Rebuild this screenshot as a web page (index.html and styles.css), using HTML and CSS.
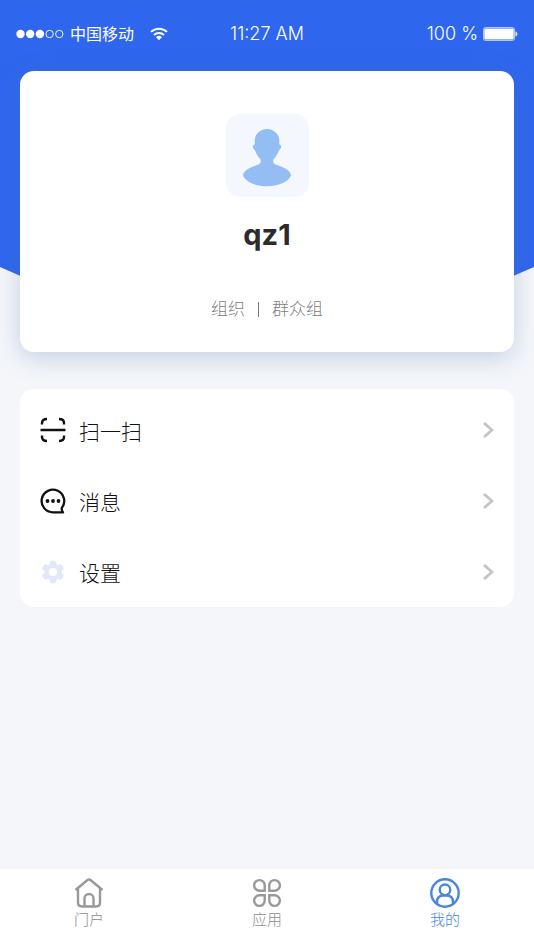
FILE: index.html
```html
<!DOCTYPE html>
<html lang="zh-CN">
<head>
  <meta charset="UTF-8" />
  <meta name="viewport" content="width=device-width, initial-scale=1" />
  <title>我的</title>
  <link rel="stylesheet" href="styles.css">
</head>
<body>

  <!-- Status bar -->
  <header class="status-bar">
    <div class="carrier">
      <svg class="signal" width="48" height="10" viewBox="0 0 48 10" aria-hidden="true">
        <g fill="#fff"><circle cx="4.5" cy="5" r="4.2"/><circle cx="14.2" cy="5" r="4.2"/><circle cx="23.9" cy="5" r="4.2"/></g>
        <g fill="none" stroke="#fff" stroke-width="0.9"><circle cx="33.6" cy="5" r="3.7"/><circle cx="43.3" cy="5" r="3.7"/></g>
      </svg>
      <span>中国移动</span>
      <svg class="wifi" width="18" height="14" viewBox="0 0 18 14" aria-hidden="true">
        <g fill="none" stroke="#fff" stroke-width="2">
          <path d="M1 4.9a11.5 11.5 0 0 1 16 0"/>
          <path d="M4 8a7.2 7.2 0 0 1 10 0"/>
        </g>
        <path d="M9 13.2L6 10.3a4.3 4.3 0 0 1 6 0z" fill="#fff"/>
      </svg>
    </div>
    <span class="clock">11:27 AM</span>
    <div class="battery">
      <span>100 %</span>
      <svg width="35" height="14" viewBox="0 0 35 14" aria-hidden="true">
        <rect x="0.5" y="0.5" width="31" height="13" rx="2" fill="none" stroke="#b3c7fa"/>
        <rect x="1.3" y="1.5" width="29.4" height="11" rx="1" fill="#fff"/>
        <path d="M32.4 4.4c2.800.6 2.800 4.600 0 5.200z" fill="#dbe4fd"/>
      </svg>
    </div>
  </header>

  <main>
    <!-- Profile -->
    <section class="profile">
      <div class="avatar">
        <svg width="50" height="60" viewBox="0 0 50 60" aria-hidden="true">
          <path fill="#93bdf3" d="M25 1C18 1.500 13 6 12.700 12v4.500c-1.800.3-2.200 1.700-1.600 3.200.5 1.500 1.200 2.300 2 2.800 1.200 3.500 3 6.500 5.400 8.800.5 2.500.3 4.200-1.500 5C10 39 2 41 1 47.500 3.500 54 14 58.200 25 58.200S46.500 54 49 47.500C48 41 40 39 33 36.300c-1.800-.8-2-2.500-1.500-5 2.400-2.300 4.200-5.300 5.400-8.800.8-.5 1.500-1.300 2-2.800.6-1.500.2-2.900-1.600-3.200V12C37 6 32 1.500 25 1z"/>
        </svg>
      </div>
      <h1>qz1</h1>
      <p class="group"><span>组织</span><span class="divider"></span><span>群众组</span></p>
    </section>

    <!-- Menu -->
    <nav class="menu">
      <a href="#scan">
        <svg width="26" height="26" viewBox="0 0 26 26" fill="none" stroke="#111" stroke-width="2.4" aria-hidden="true">
          <path d="M2 7.500V6q0-4 5-4M19 2q5 0 5 4v1.500M24 18.500V20q0 4-5 4M7 24q-5 0-5-4v-1.500M0.500 13h25"/>
        </svg>
        <span>扫一扫</span>
        <svg class="arrow" width="12" height="18" viewBox="0 0 12 18" aria-hidden="true"><path d="M2 2l8 7-8 7"/></svg>
      </a>
      <a href="#messages">
        <svg width="26" height="26" viewBox="0 0 26 26" aria-hidden="true">
          <path d="M13 24.300A11.300 11.300 0 1 1 21.800 20q-.4 2.300 1.200 4.300z" fill="none" stroke="#111" stroke-width="2.300" stroke-linejoin="round"/>
          <g fill="#111"><circle cx="7.500" cy="13" r="1.900"/><circle cx="13" cy="13" r="1.900"/><circle cx="18.500" cy="13" r="1.900"/></g>
        </svg>
        <span>消息</span>
        <svg class="arrow" width="12" height="18" viewBox="0 0 12 18" aria-hidden="true"><path d="M2 2l8 7-8 7"/></svg>
      </a>
      <a href="#settings">
        <svg width="26" height="26" viewBox="0 0 24 24" aria-hidden="true">
          <path fill="#e1e9f9" stroke="#e1e9f9" stroke-width="0.800" stroke-linejoin="round" d="M19.430 12.980c.04-.32.070-.64.070-.98s-.03-.66-.07-.98l2.110-1.650c.19-.15.24-.42.120-.64l-2-3.460c-.12-.22-.39-.3-.61-.22l-2.490 1c-.52-.4-1.080-.73-1.690-.98l-.38-2.650A.488.488 0 0 0 14 2h-4c-.25 0-.46.18-.49.420l-.38 2.650c-.61.25-1.170.59-1.690.98l-2.490-1c-.23-.09-.49 0-.61.220l-2 3.460c-.13.220-.07.490.12.640l2.110 1.650c-.04.320-.07.650-.07.980s.03.660.070.980l-2.110 1.650c-.19.150-.24.420-.12.640l2 3.460c.12.220.39.300.61.220l2.490-1c.52.400 1.080.730 1.690.980l.38 2.650c.03.240.24.420.49.420h4c.25 0 .46-.18.490-.42l.38-2.650c.61-.25 1.170-.59 1.690-.98l2.490 1c.23.090.49 0 .61-.22l2-3.460c.12-.22.070-.49-.12-.64l-2.110-1.650z"/>
          <circle cx="12" cy="12" r="3.800" fill="#fff"/>
        </svg>
        <span>设置</span>
        <svg class="arrow" width="12" height="18" viewBox="0 0 12 18" aria-hidden="true"><path d="M2 2l8 7-8 7"/></svg>
      </a>
    </nav>
  </main>

  <!-- Tab bar -->
  <nav class="tabs">
    <a href="#portal">
      <svg width="30" height="30" viewBox="0 0 30 30" aria-hidden="true">
        <path d="M1.500 12L13.500 2q1.500-1.200 3 0l12 10M4 10.500V24.500q0 4 4 4H22q4 0 4-4V10.500M10.500 28V20.500a4.500 4.500 0 0 1 9 0V28"/>
      </svg>
      <span>门户</span>
    </a>
    <a href="#apps">
      <svg width="30" height="30" viewBox="0 0 30 30" aria-hidden="true">
        <path d="M12.700 12.700H7.500A5.300 5.300 0 1 1 12.700 7.500zM17.300 12.700V7.500a5.300 5.300 0 1 1 5.200 5.200zM12.700 17.300V22.500a5.300 5.300 0 1 1-5.200-5.200zM17.300 17.300h5.200a5.300 5.300 0 1 1-5.200 5.200z"/>
      </svg>
      <span>应用</span>
    </a>
    <a class="active" href="#mine">
      <svg width="30" height="30" viewBox="0 0 30 30" aria-hidden="true">
        <circle cx="15" cy="15" r="13.700"/>
        <circle cx="15" cy="11.800" r="5.300"/>
        <path d="M7 25.500V24q0-6.500 6.500-6.500h3q6.500 0 6.500 6.500v1.500"/>
      </svg>
      <span>我的</span>
    </a>
  </nav>

</body>
</html>
```

FILE: styles.css
```css
* {
  box-sizing: border-box;
}
body {
  margin: 0;
  min-height: 100vh;
  display: flex;
  flex-direction: column;
  font-family: Inter, "Noto Sans CJK SC", sans-serif;
  background-color: #f4f6fa;
  color: #111;
}
/* blue backdrop with slanted lower corners */
body::before {
  content: "";
  position: absolute;
  top: 0;
  left: 0;
  right: 0;
  height: 302px;
  z-index: -1;
  background-color: #2f66ee;
  clip-path: polygon(0 0, 100% 0, 100% 267px, 85% 100%, 15% 100%, 0 267px);
}
a {
  color: inherit;
  text-decoration: none;
}
svg {
  display: block;
  flex-shrink: 0;
}
.status-bar {
  display: grid;
  grid-template-columns: 1fr auto 1fr;
  align-items: center;
  height: 67px;
  padding: 0 16px;
  font-size: 18px;
  line-height: 24px;
  color: #fff;
}
.carrier,
.battery {
  display: flex;
  align-items: center;
}
.carrier {
  gap: 6px;
  font-size: 16px;
}
.wifi {
  margin-left: 10px;
}
.clock,
.battery {
  font-weight: 300;
}
.battery {
  justify-content: flex-end;
  gap: 5px;
}
main {
  flex: 1;
  padding: 4px 20px 20px;
}
.profile {
  display: flex;
  flex-direction: column;
  align-items: center;
  padding: 43px 20px 31px;
  background-color: #fff;
  border-radius: 14px;
  box-shadow: 0 6px 24px rgba(80, 115, 165, 0.28);
}
.avatar {
  display: flex;
  align-items: center;
  justify-content: center;
  width: 83px;
  height: 83px;
  padding-top: 4px;
  border-radius: 14px;
  background-color: #f4f8fe;
}
h1 {
  margin: 18px 0 0;
  font-size: 29px;
  line-height: 40px;
  font-weight: 700;
  color: #2b2b2b;
}
.group {
  display: flex;
  align-items: center;
  margin: 42px 0 0;
  font-size: 17px;
  line-height: 24px;
  font-weight: 300;
  color: #808080;
}
.divider {
  width: 1px;
  height: 15px;
  margin: 0 13px;
  background-color: #777;
}
.menu {
  margin-top: 37px;
  padding-top: 5px;
  background-color: #fff;
  border-radius: 14px;
}
.menu a {
  display: flex;
  align-items: center;
  gap: 13px;
  height: 71px;
  padding: 0 20px;
  font-size: 21px;
  font-weight: 300;
}
.arrow {
  margin-left: auto;
  fill: none;
  stroke: #c4c4c4;
  stroke-width: 2.8;
}
.tabs {
  display: grid;
  grid-template-columns: repeat(3, 1fr);
  height: 81px;
  padding-top: 9px;
  background-color: #fff;
}
.tabs a {
  display: flex;
  flex-direction: column;
  align-items: center;
  font-size: 15px;
  line-height: 24px;
  font-weight: 300;
  color: #8c8c8c;
}
.tabs svg {
  fill: none;
  stroke: #999;
  stroke-width: 2.4;
}
.tabs .active {
  color: #4a86e0;
}
.tabs .active svg {
  stroke: #4a86e0;
}
```
